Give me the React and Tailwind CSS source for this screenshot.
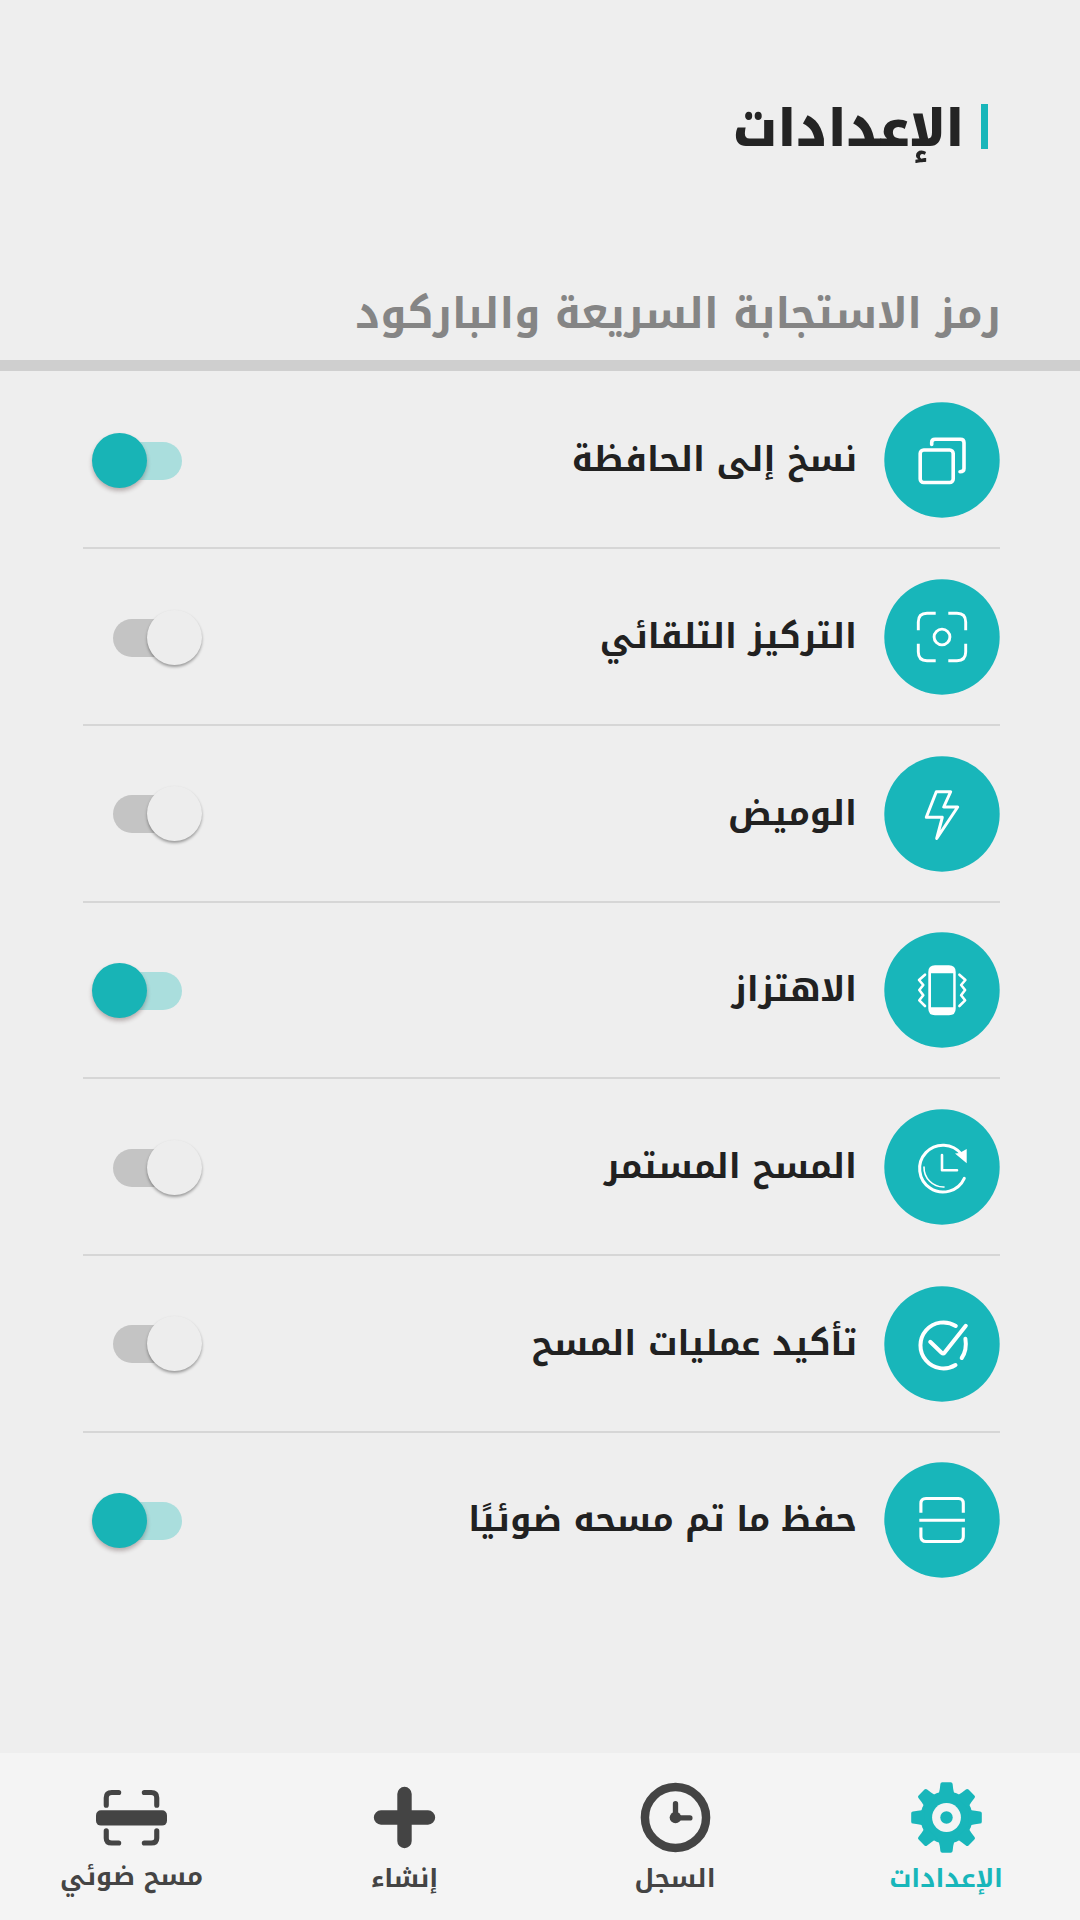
import React, { useState } from "react";

const ICON = {
  fill: "none",
  stroke: "#fff",
  strokeLinecap: "round",
  strokeLinejoin: "round",
};

// Every icon is drawn on the same 116px disc
const Disc = ({ children }) => (
  <svg className="w-[116px] h-[116px] shrink-0" viewBox="0 0 116 116" {...ICON}>
    <circle cx="58" cy="58" r="57.7" fill="#18b6ba" stroke="none" />
    {children}
  </svg>
);

const CopyIcon = () => (
  <Disc>
    <g strokeWidth="3.6">
      <rect x="36.2" y="48" width="33" height="32.5" rx="3.5" />
      <path d="M47.7 42.5V40.5Q47.7 37.2 51 37.2H76.5Q80 37.2 80 40.7V66.5Q80 69.7 76 69.7" />
    </g>
  </Disc>
);

const FocusIcon = () => (
  <Disc>
    <g strokeWidth="2.9" strokeLinecap="butt">
      <path d="M51.7 34.3H43Q34.3 34.3 34.3 43V51.3M64.3 34.3H73Q81.7 34.3 81.7 43V51.3M34.3 64.7V73Q34.3 81.7 43 81.7H51.7M81.7 64.7V73Q81.7 81.7 73 81.7H64.3" />
      <circle cx="58" cy="58" r="7.9" />
    </g>
  </Disc>
);

const FlashIcon = () => (
  <Disc>
    <path strokeWidth="3" d="M52.3 35.7H66.7L59.7 51H73.7L52.7 82.5L58.3 61.3H42.3Z" />
  </Disc>
);

const VibrateIcon = () => (
  <Disc>
    <path
      fill="#fff"
      stroke="none"
      fillRule="evenodd"
      d="M51 33.3H65Q71.7 33.3 71.7 40V76.5Q71.7 83.3 65 83.3H51Q44.3 83.3 44.3 76.5V40Q44.3 33.3 51 33.3ZM47 41.3V75.3H69.2V41.3Z"
    />
    <path strokeWidth="2.6" d="M41 42.7L35 48L39.3 53L35.3 58L39.3 63.3L35.3 68.3L41 74M75.4 42.7L81.4 48L77.1 53L81.1 58L77.1 63.3L81.1 68.3L75.4 74" />
  </Disc>
);

const HistoryIcon = () => (
  <Disc>
    <path strokeWidth="3" d="M80.3 69.3A23.4 23.4 0 1 1 77.5 45.2" />
    <path fill="#fff" stroke="none" d="M82.7 40V54.3L71 44.6L75.5 44Z" />
    <path strokeWidth="2.6" d="M58 46V61.2H73" />
    <path strokeWidth="1.6" d="M40 58A19.5 19.5 0 0 0 60 78" />
  </Disc>
);

const ConfirmIcon = () => (
  <Disc>
    <g strokeWidth="4">
      <path d="M71.8 40A23 23 0 1 0 71.5 79" />
      <path d="M81.4 52.8Q83.2 64 77.7 72" />
      <path d="M46.2 55.8L57.6 66.8Q59.2 68.2 60.6 66.6L81.8 39.8" />
    </g>
  </Disc>
);

const SaveIcon = () => (
  <Disc>
    <path
      strokeWidth="3.1"
      strokeLinecap="butt"
      d="M36.9 50.7V41.5Q36.9 36.5 42 36.5H74.5Q79.3 36.5 79.3 41.5V50.7M36.9 65.6V74.5Q36.9 79.5 42 79.5H74.5Q79.3 79.5 79.3 74.5V65.6M35.3 58.2H80.9"
    />
  </Disc>
);

const Toggle = ({ on, onClick }) => (
  <button onClick={onClick} className="relative block h-[55px] w-[111px] shrink-0 me-[9px]">
    <span
      className={`absolute top-[9px] h-[38px] rounded-full ${
        on ? "left-[10px] w-[80px] bg-[#aadedd]" : "left-[21px] w-[80px] bg-[#c4c4c4]"
      }`}
    />
    <span
      className={`absolute top-0 size-[55px] rounded-full ${
        on
          ? "left-0 bg-[#18b4b6] shadow-[0_3px_4px_rgba(60,30,30,0.3)]"
          : "left-[55px] bg-[#ededed] shadow-[0_2px_3px_rgba(0,0,0,0.35)]"
      }`}
    />
  </button>
);

const SETTINGS = [
  { label: "نسخ إلى الحافظة", Icon: CopyIcon, on: true },
  { label: "التركيز التلقائي", Icon: FocusIcon, on: false },
  { label: "الوميض", Icon: FlashIcon, on: false },
  { label: "الاهتزاز", Icon: VibrateIcon, on: true },
  { label: "المسح المستمر", Icon: HistoryIcon, on: false },
  { label: "تأكيد عمليات المسح", Icon: ConfirmIcon, on: false },
  { label: "حفظ ما تم مسحه ضوئيًا", Icon: SaveIcon, on: true },
];

const GearIcon = () => (
  <svg className="size-[71px]" viewBox="-36 -36 72 72" fill="#18b6ba">
    <circle r="26.5" />
    {[0, 45, 90, 135, 180, 225, 270, 315].map((a) => (
      <path
        key={a}
        transform={`rotate(${a})`}
        d="M-9 -22Q-7.3 -25 -6.8 -29L-6.2 -34Q-6 -35.8 -4.2 -35.8H4.2Q6 -35.8 6.2 -34L6.8 -29Q7.3 -25 9 -22Z"
      />
    ))}
    <circle r="14.6" fill="#f4f4f4" />
    <circle r="6.3" />
  </svg>
);

const ClockIcon = () => (
  <svg className="size-[71px]" viewBox="-36 -36 72 72" fill="none" stroke="#444" strokeLinecap="round">
    <circle r="31" strokeWidth="8.6" />
    <circle r="5.9" fill="#444" stroke="none" />
    <path strokeWidth="5.4" d="M0 0V-14M0 0.4H14.6" />
  </svg>
);

const PlusIcon = () => (
  <svg className="size-[71px]" viewBox="-36 -36 72 72" stroke="#444" strokeWidth="14.6" strokeLinecap="round">
    <path d="M0 -23.8V23.8M-23.8 0H23.8" />
  </svg>
);

const ScanIcon = () => (
  <svg className="size-[71px]" viewBox="-36 -36 72 72" fill="none" stroke="#444" strokeLinecap="round">
    <rect x="-36" y="-7.4" width="72" height="15.6" rx="5" fill="#444" stroke="none" />
    <path
      strokeWidth="5.2"
      d="M-25.6 -12.5V-20Q-25.6 -25.3 -20 -25.3H-13M25.6 -12.5V-20Q25.6 -25.3 20 -25.3H13M-25.6 13.5V21Q-25.6 25.9 -20 25.9H-13M25.6 13.5V21Q25.6 25.9 20 25.9H13"
    />
  </svg>
);

// The tabs are slightly uneven, so each one carries its own width
const TABS = [
  { label: "الإعدادات", Icon: GearIcon, active: true, box: "w-[268px]" },
  { label: "السجل", Icon: ClockIcon, box: "w-[274px]" },
  { label: "إنشاء", Icon: PlusIcon, box: "w-[267px]" },
  { label: "مسح ضوئي", Icon: ScanIcon, box: "w-[271px] ps-[8px] pb-[2px]" },
];

export default function App() {
  const [settings, setSettings] = useState(SETTINGS.map((s) => s.on));

  const flip = (i) => setSettings((prev) => prev.map((v, n) => (n === i ? !v : v)));

  return (
    <div
      dir="rtl"
      className="w-[1080px] h-[1920px] bg-[#eeeeee] flex flex-col overflow-hidden font-['Noto_Kufi_Arabic','Noto_Sans','DejaVu_Sans',sans-serif]"
    >
      {/* Title */}
      <header className="h-[263px] ps-[92px] pt-[104px] flex items-start gap-[17px]">
        <span className="w-[7px] h-[45px] bg-[#18b6ba]" />
        <h1 className="text-[51.5px] leading-[51px] font-black text-[#242424] origin-right scale-x-[0.936]">
          الإعدادات
        </h1>
      </header>

      {/* Section heading */}
      <div className="h-[108px] ps-[79px] pt-[27px] border-b-[11px] border-[#cfcfcf]">
        <h2 className="text-[42px] leading-[48px] font-bold text-[#858585] whitespace-nowrap">
          رمز الاستجابة السريعة والباركود
        </h2>
      </div>

      <main className="flex-1 ps-20 pe-[83px] pt-[1.5px]">
        {SETTINGS.map(({ label, Icon }, i) => (
          <div
            key={label}
            className="h-[176.7px] pt-[1px] flex items-center border-b-2 border-[#d6d6d6] last:border-transparent"
          >
            <Icon />
            <span className="ms-[27px] flex-1 text-[34.2px] leading-[48px] font-bold text-[#212121] whitespace-nowrap">
              {label}
            </span>
            <Toggle on={settings[i]} onClick={() => flip(i)} />
          </div>
        ))}
      </main>

      {/* Bottom tabs */}
      <nav className="h-[167px] bg-[#f4f4f4] flex">
        {TABS.map(({ label, Icon, active, box }) => (
          <div
            key={label}
            className={`${box} h-full shrink-0 flex flex-col items-center justify-between text-[25.6px] leading-[36px] font-bold whitespace-nowrap ${
              active ? "text-[#18b6ba]" : "text-[#444444]"
            }`}
          >
            <div className="mt-[29px]">
              <Icon />
            </div>
            <span className="mb-[23px]">{label}</span>
          </div>
        ))}
      </nav>
    </div>
  );
}
